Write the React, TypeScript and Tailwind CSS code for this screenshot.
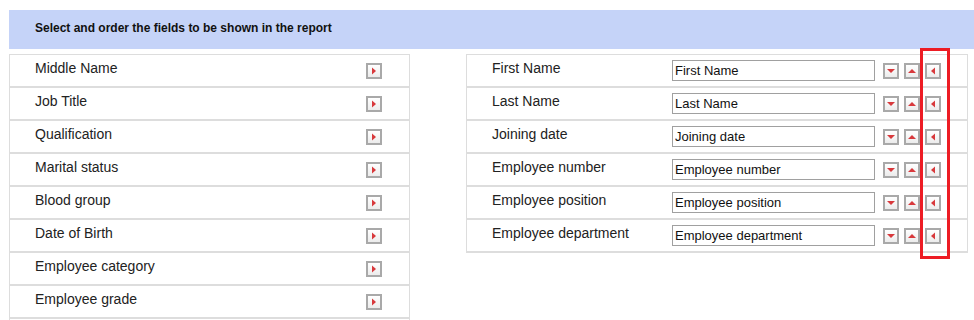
import React from 'react';

const available = [
  'Middle Name',
  'Job Title',
  'Qualification',
  'Marital status',
  'Blood group',
  'Date of Birth',
  'Employee category',
  'Employee grade',
];

const selected = [
  'First Name',
  'Last Name',
  'Joining date',
  'Employee number',
  'Employee position',
  'Employee department',
];

type Dir = 'right' | 'left' | 'up' | 'down';

function Arrow({ dir }: { dir: Dir }) {
  const pts: Record<Dir, string> = {
    right: '4,2.5 8,6 4,9.5',
    left: '8,2.5 4,6 8,9.5',
    down: '2,4 10,4 6,8',
    up: '2,8 10,8 6,4',
  };
  return (
    <button className="w-[16px] h-[16px] border-2 border-[#a9a9a9] bg-gradient-to-b from-white to-[#ececec] flex items-center justify-center p-0">
      <svg width="12" height="12" viewBox="0 0 12 12" className="shrink-0">
        <polygon points={pts[dir]} fill="#d8393c" />
      </svg>
    </button>
  );
}

export default function App() {
  return (
    <div className="relative w-[974px] h-[320px] overflow-hidden bg-white pt-[10px] pl-[9px] font-['Liberation_Sans',Arial,sans-serif] text-[#222]">
      <div className="h-[39px] w-[980px] bg-[#c5d3f8] flex items-center pl-[26px]">
        <span className="text-[12px] font-bold text-[#111] -mt-[4px]">
          Select and order the fields to be shown in the report
        </span>
      </div>

      <div className="flex items-start gap-[56px] mt-[5px]">
        {/* available fields */}
        <div className="w-[401px] border border-b-0 border-[#dddddd]">
          {available.map((f) => (
            <div key={f} className="h-[33px] border-b-2 border-[#dddddd] flex items-center pl-[25px] pr-[27px] justify-between">
              <span className="text-[14px] -mt-[4px]">{f}</span>
              <Arrow dir="right" />
            </div>
          ))}
          <div className="h-[33px]" />
        </div>

        {/* selected fields */}
        <div className="w-[502px] border border-b-0 border-[#dddddd]">
          {selected.map((f) => (
            <div key={f} className="h-[33px] border-b-2 border-[#dddddd] flex items-center pl-[25px]">
              <span className="text-[14px] -mt-[4px] w-[180px]">{f}</span>
              <input
                readOnly
                value={f}
                className="w-[203px] h-[21px] border border-[#a0a0a0] px-[2px] text-[13px] text-[#111] outline-none"
              />
              <div className="flex gap-[5px] ml-[8px]">
                <Arrow dir="down" />
                <Arrow dir="up" />
                <Arrow dir="left" />
              </div>
            </div>
          ))}
        </div>
      </div>

      {/* highlight annotation */}
      <div className="absolute left-[920px] top-[48px] w-[30px] h-[211px] border-[3px] border-[#ed1c24]" />
    </div>
  );
}
